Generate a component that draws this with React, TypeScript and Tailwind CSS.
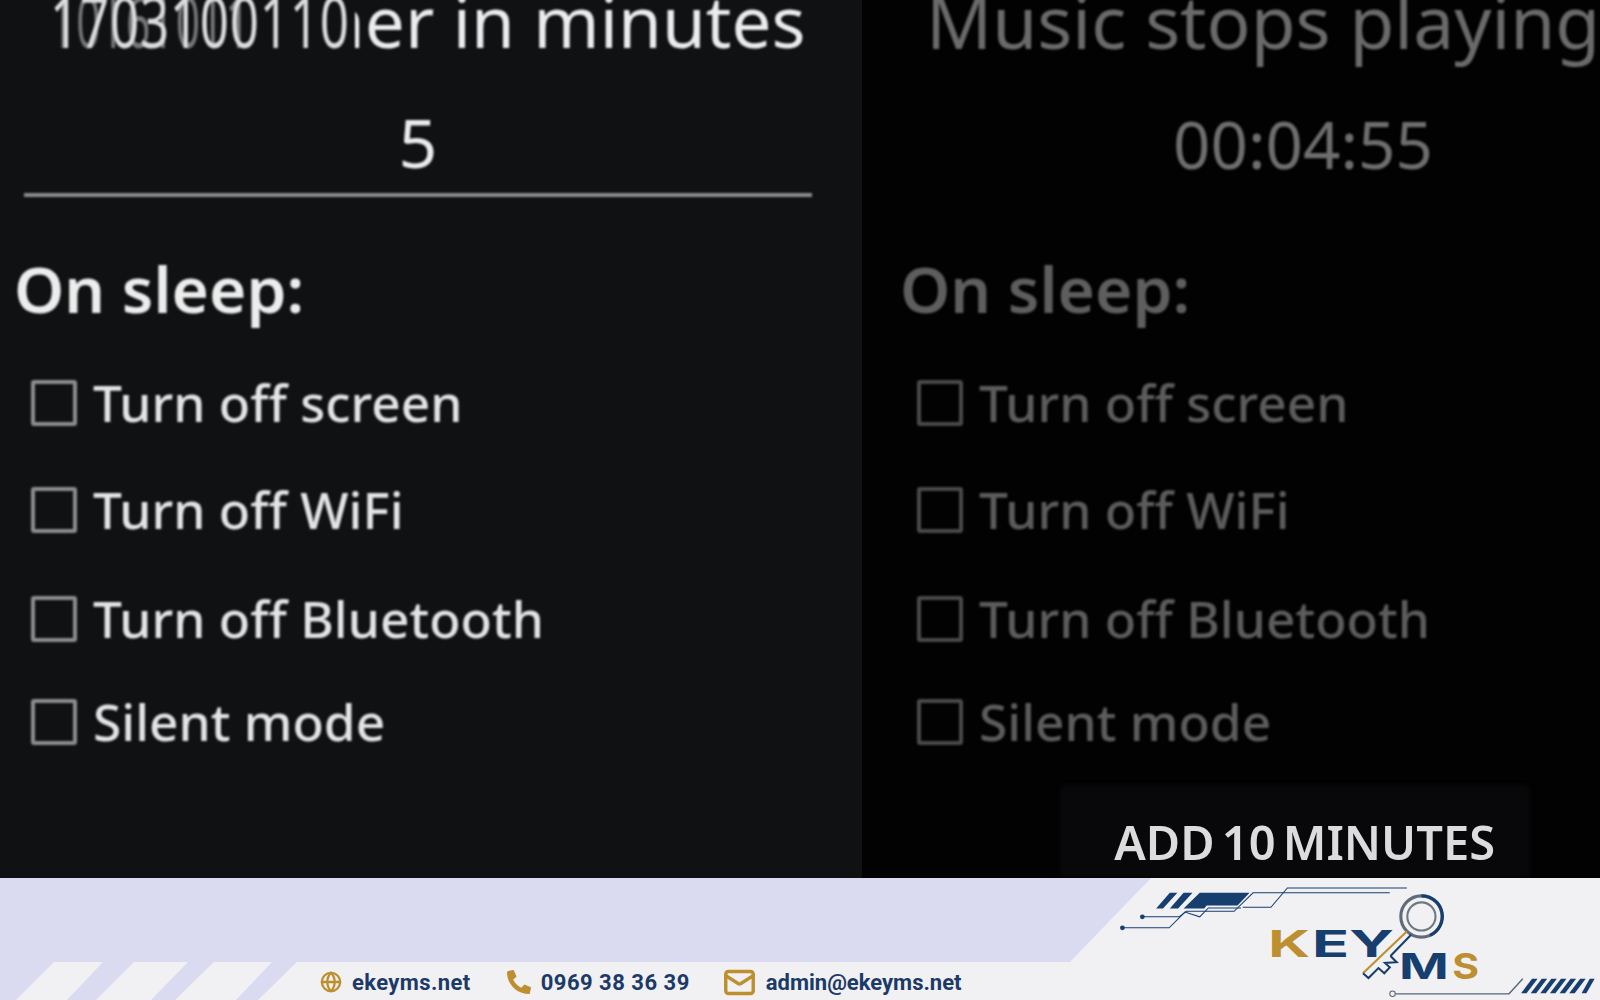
import { Globe, Mail } from 'lucide-react';
import { FaPhoneAlt } from 'react-icons/fa';

const options = ['Turn off screen', 'Turn off WiFi', 'Turn off Bluetooth', 'Silent mode'];
const rowHeights = ['h-[105px]', 'h-[109px]', 'h-[109px]', 'h-[97px]'];

function OptionList({ text, box }: { text: string; box: string }) {
  return (
    <div className="flex flex-col">
      {options.map((label, i) => (
        <div key={label} className={`flex items-center gap-[16px] ${rowHeights[i]}`}>
          <span className={`w-[46px] h-[46px] rounded-[3px] border-[4px] ${box}`} />
          <span className={`text-[51.4px] leading-none font-medium ${text}`}>{label}</span>
        </div>
      ))}
    </div>
  );
}

function Logo() {
  return (
    <svg viewBox="0 23 1568 355" className="absolute top-0 right-0 w-[540px] h-[122px]" fill="none">
      <g fill="#163f70">
        <polygon points="278,112 318,66 340,66 298,112" />
        <polygon points="318,112 358,66 384,66 342,112" />
        <polygon points="358,112 405,66 550,66 515,103 425,103 418,112" />
      </g>
      <g stroke="#163f70" strokeWidth="3">
        <polyline points="238,136 345,136 366,120 505,120 560,66 958,66" />
        <polyline points="180,168 316,168 362,122 405,136 430,110 525,110" />
        <polyline points="530,108 612,108 660,52 1008,52" />
      </g>
      <circle cx="238" cy="136" r="7" fill="#163f70" />
      <circle cx="180" cy="168" r="7" fill="#163f70" />

      <circle cx="1050" cy="135" r="60" stroke="#5f6b78" strokeWidth="9" />
      <path d="M1050 75 A60 60 0 0 1 1075 190" stroke="#163f70" strokeWidth="9" />
      <circle cx="1050" cy="135" r="41" stroke="#6e7883" strokeWidth="6" />
      <path d="M1008 178 L880 300" stroke="#bd8f30" strokeWidth="6" />
      <path d="M1020 188 L960 250" stroke="#163f70" strokeWidth="6" />
      <path d="M880 300 L896 314 L925 285 L942 300 L958 283 L944 270 L978 268 L960 250" stroke="#163f70" strokeWidth="6" />

      <text x="604" y="253" fontSize="108" fontFamily="Inter, sans-serif" fontWeight="700" textLength="122" lengthAdjust="spacingAndGlyphs" fill="#bd8f30">K</text>
      <text x="732" y="253" fontSize="108" fontFamily="Inter, sans-serif" fontWeight="700" textLength="238" lengthAdjust="spacingAndGlyphs" fill="#163f70">EY</text>
      <text x="985" y="316" fontSize="104" fontFamily="Inter, sans-serif" fontWeight="700" textLength="145" lengthAdjust="spacingAndGlyphs" fill="#163f70">M</text>
      <text x="1140" y="316" fontSize="104" fontFamily="Inter, sans-serif" fontWeight="700" textLength="78" lengthAdjust="spacingAndGlyphs" fill="#bd8f30">S</text>

      <circle cx="966" cy="360" r="8" fill="#f1f1f3" stroke="#56657a" strokeWidth="3" />
      <polyline points="974,360 1305,360 1345,316" stroke="#56657a" strokeWidth="4" />
      <g fill="#163f70">
        <polygon points="1340,358 1372,316 1388,316 1356,358" />
        <polygon points="1368,358 1400,316 1416,316 1384,358" />
        <polygon points="1396,358 1428,316 1444,316 1412,358" />
        <polygon points="1424,358 1456,316 1472,316 1440,358" />
        <polygon points="1452,358 1484,316 1500,316 1468,358" />
        <polygon points="1480,358 1512,316 1528,316 1496,358" />
        <polygon points="1516,358 1540,316 1554,316 1530,358" />
      </g>
    </svg>
  );
}

export default function App() {
  return (
    <div className="w-[1600px] h-[1000px] overflow-hidden flex flex-col font-['Noto_Sans',sans-serif]">
      <div className="h-[878px] flex overflow-hidden">
        {/* left panel, the timer setup */}
        <div className="w-[862px] shrink-0 bg-[#0f1113] overflow-hidden">
          <div className="blur-[0.9px]">
            <div className="relative h-[72px] -mt-[15px] pl-[55px] text-[71px] leading-[72px] text-[#ececec] whitespace-nowrap">
              <span>Sleep timer in minutes</span>
              {/* the first words are garbled in the source, two layers of text on top of each other */}
              <div className="absolute left-[50px] top-0 w-[305px] h-[90px] overflow-hidden bg-[#0f1113]">
                <span className="block origin-left scale-x-[0.72] tracking-[1px] text-[#dcdcdc]">1703100110</span>
                <span className="absolute left-[8px] top-0 block origin-left scale-x-[0.6] tracking-[12px] text-[#dcdcdc]/50">l0l6l0l1</span>
              </div>
            </div>
            <div className="mt-[33px] ml-[24px] w-[788px] h-[107px] border-b-[4px] border-[#8c8c8c] flex items-center justify-center text-[68px] leading-none text-[#ececec]">
              5
            </div>
            <div className="mt-[52px] ml-[14px] text-[64px] leading-[80px] font-semibold text-[#ededed]">On sleep:</div>
            <div className="ml-[31px] mt-[21px]">
              <OptionList text="text-[#e4e4e4]" box="border-[#8e8e8e]" />
            </div>
          </div>
        </div>

        {/* right panel, dimmed while the timer runs */}
        <div className="relative flex-1 min-w-0 bg-[#020203] overflow-hidden">
          <div className="blur-[0.9px]">
            <div className="h-[72px] -mt-[15px] pl-[64px] text-[73px] leading-[72px] text-[#6a6a6a] whitespace-nowrap">
              Music stops playing in
            </div>
            <div className="mt-[33px] h-[107px] w-[882px] flex items-center justify-center text-[65.5px] leading-none text-[#6e6e6e]">
              00:04:55
            </div>
            <div className="mt-[52px] ml-[38px] text-[64px] leading-[80px] font-semibold text-[#5e5e5e]">On sleep:</div>
            <div className="ml-[55px] mt-[21px]">
              <OptionList text="text-[#5c5c5c]" box="border-[#4a4a4a]" />
            </div>
          </div>
          <div className="absolute right-[70px] bottom-0 w-[470px] h-[93px] rounded-t-[6px] bg-[#08080a] blur-[2px]" />
          <div className="absolute right-[105px] bottom-0 h-[72px] flex items-center text-[47px] leading-none font-semibold [word-spacing:-5px] text-[#dcdcdc] whitespace-nowrap blur-[0.7px]">
            ADD 10 MINUTES
          </div>
        </div>
      </div>

      <div className="relative h-[122px] bg-[#dadbf0] flex items-end">
        <svg viewBox="0 0 1600 122" className="absolute inset-0 w-full h-full" fill="#f1f1f3">
          <polygon points="54,84 103,84 67,122 16,122" />
          <polygon points="134,84 188,84 151,122 96,122" />
          <polygon points="214,84 272,84 236,122 175,122" />
          <polygon points="297,84 1070,84 1151,0 1600,0 1600,122 258,122" />
        </svg>
        <Logo />
        <div className="relative flex items-center h-[36px] pl-[320px] text-[22px] font-bold text-[#1b3a68] font-['Roboto',sans-serif] whitespace-nowrap">
          <Globe className="w-[22px] h-[22px] text-[#be8f2f]" strokeWidth={2.5} />
          <span className="ml-[10px] tracking-[0.4px]">ekeyms.net</span>
          <FaPhoneAlt className="ml-[36px] w-[24px] h-[24px] text-[#be8f2f]" />
          <span className="ml-[10px] tracking-[0.5px]">0969 38 36 39</span>
          <Mail className="ml-[33px] w-[33px] h-[33px] text-[#be8f2f]" strokeWidth={2.5} />
          <span className="ml-[10px]">admin@ekeyms.net</span>
        </div>
      </div>
    </div>
  );
}
